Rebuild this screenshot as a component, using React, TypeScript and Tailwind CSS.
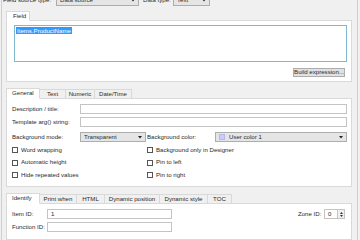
import React from 'react';

const Arrow = () => (
  <svg width="4" height="3" viewBox="0 0 4 3" className="shrink-0">
    <path d="M0 0 L4 0 L2 2.5 Z" fill="#222" />
  </svg>
);

const Combo = ({ text, className, swatch }: { text: string; className: string; swatch?: boolean }) => (
  <div className={`flex items-center bg-[#e5e5e5] border border-[#adadad] px-[3px] ${className}`}>
    {swatch && <span className="w-[6px] h-[6px] bg-[#ccccff] border border-[#b8b8e8] mr-[4px] shrink-0" />}
    <span className="flex-1 truncate">{text}</span>
    <Arrow />
  </div>
);

const Input = ({ className, value }: { className: string; value?: string }) => (
  <div className={`flex items-center bg-white border border-[#c4c4c4] px-[3px] ${className}`}>{value}</div>
);

const Check = ({ label }: { label: string }) => (
  <div className="flex items-center h-[6px]">
    <span className="w-[6px] h-[6px] border border-[#555] bg-white shrink-0" />
    <span className="ml-[3px]">{label}</span>
  </div>
);

const Tabs = ({ items, widths }: { items: string[]; widths: string[] }) => (
  <div className="flex items-end h-[11px] relative z-10 -mb-px">
    {items.map((t, i) =>
      i === 0 ? (
        <div key={t} className={`${widths[i]} h-[11px] bg-white border border-[#d9d9d9] border-b-white flex items-center pl-[5px]`}>
          {t}
        </div>
      ) : (
        <div
          key={t}
          className={`${widths[i]} h-[10px] bg-[#f0f0f0] border border-[#d9d9d9] border-l-0 border-b-[#d9d9d9] flex items-center justify-center`}
        >
          {t}
        </div>
      )
    )}
  </div>
);

export default function App() {
  return (
    <div className="w-[360px] h-[240px] overflow-hidden whitespace-nowrap bg-[#f0f0f0] font-['Liberation_Sans',sans-serif] text-[6.1px] leading-none text-[#2a2a2a]">
      <div className="h-full ml-[1px] mr-[2px] border-x border-[#cfcfcf] flex flex-col">
        {/* top row */}
        <div className="flex items-center h-[12px] mt-[-6px] pl-[1px] shrink-0">
          <span className="w-[53px]">Field source type:</span>
          <Combo text="Data source" className="w-[83px] h-[12px]" />
          <span className="w-[30px] ml-[4px]">Data type:</span>
          <Combo text="Text" className="w-[37px] h-[12px]" />
        </div>

        <div className="flex flex-col flex-1 pl-[4px] pr-[5px]">
          {/* Field */}
          <div className="mt-[5px] flex items-end h-[10px] relative z-10 -mb-px">
            <div className="w-[24px] h-[10px] bg-white border border-[#d9d9d9] border-b-white flex items-center pl-[6px]">Field</div>
          </div>
          <div className="h-[62px] bg-white border border-[#d9d9d9] pl-[7px] pr-[4px] pt-[4px] flex flex-col">
            <div className="h-[37px] border border-[#7fb9cf] p-[1px]">
              <span className="inline-block bg-[#3399ff] text-white px-[1px] py-[0.5px]">Items.ProductName</span>
            </div>
            <div className="flex justify-end mt-[6px] pr-[2px]">
              <div className="w-[52px] h-[9px] bg-[#e1e1e1] border border-[#adadad] flex items-center justify-center">
                Build expression...
              </div>
            </div>
          </div>

          {/* General tabs */}
          <div className="mt-[6px]">
            <Tabs items={['General', 'Text', 'Numeric', 'Date/Time']} widths={['w-[34px]', 'w-[26px]', 'w-[29px]', 'w-[37px]']} />
          </div>
          <div className="h-[89px] bg-white border border-[#d9d9d9] pl-[5px] pr-[4px] pt-[5px] flex flex-col">
            <div className="flex items-center h-[10px]">
              <span className="w-[68px]">Description / title:</span>
              <Input className="flex-1 h-[10px]" />
            </div>
            <div className="flex items-center h-[10px] mt-[3px]">
              <span className="w-[68px]">Template arg() string:</span>
              <Input className="flex-1 h-[10px]" />
            </div>
            <div className="flex items-center h-[10px] mt-[5px]">
              <span className="w-[68px]">Background mode:</span>
              <Combo text="Transparent" className="w-[66px] h-[10px]" />
              <span className="w-[68px] ml-[1px]">Background color:</span>
              <Combo text="User color 1" className="flex-1 h-[10px]" swatch />
            </div>
            <div className="flex mt-[5px]">
              <div className="w-[135px] flex flex-col gap-[6.5px]">
                <Check label="Word wrapping" />
                <Check label="Automatic height" />
                <Check label="Hide repeated values" />
              </div>
              <div className="flex flex-col gap-[6.5px]">
                <Check label="Background only in Designer" />
                <Check label="Pin to left" />
                <Check label="Pin to right" />
              </div>
            </div>
          </div>

          {/* Identify tabs */}
          <div className="mt-[6px]">
            <Tabs
              items={['Identify', 'Print when', 'HTML', 'Dynamic position', 'Dynamic style', 'TOC']}
              widths={['w-[34px]', 'w-[37px]', 'w-[28px]', 'w-[55px]', 'w-[48px]', 'w-[24px]']}
            />
          </div>
          <div className="flex-1 bg-white border border-[#d9d9d9] pl-[5px] pr-[6px] pt-[5px] flex flex-col">
            <div className="flex items-center h-[10px]">
              <span className="w-[35px]">Item ID:</span>
              <Input className="w-[125px] h-[10px]" value="1" />
              <span className="ml-auto w-[26px]">Zone ID:</span>
              <div className="w-[21px] h-[10px] bg-white border border-[#c4c4c4] flex items-center pl-[3px]">
                <span className="flex-1">0</span>
                <div className="w-[7px] h-full border-l border-[#c4c4c4] bg-[#f0f0f0] flex flex-col items-center justify-center gap-[1px]">
                  <svg width="3" height="2" viewBox="0 0 3 2"><path d="M0 2 L3 2 L1.5 0 Z" fill="#333" /></svg>
                  <svg width="3" height="2" viewBox="0 0 3 2"><path d="M0 0 L3 0 L1.5 2 Z" fill="#333" /></svg>
                </div>
              </div>
            </div>
            <div className="flex items-center h-[10px] mt-[3px]">
              <span className="w-[35px]">Function ID:</span>
              <Input className="w-[125px] h-[10px]" />
            </div>
          </div>
        </div>
      </div>
    </div>
  );
}
